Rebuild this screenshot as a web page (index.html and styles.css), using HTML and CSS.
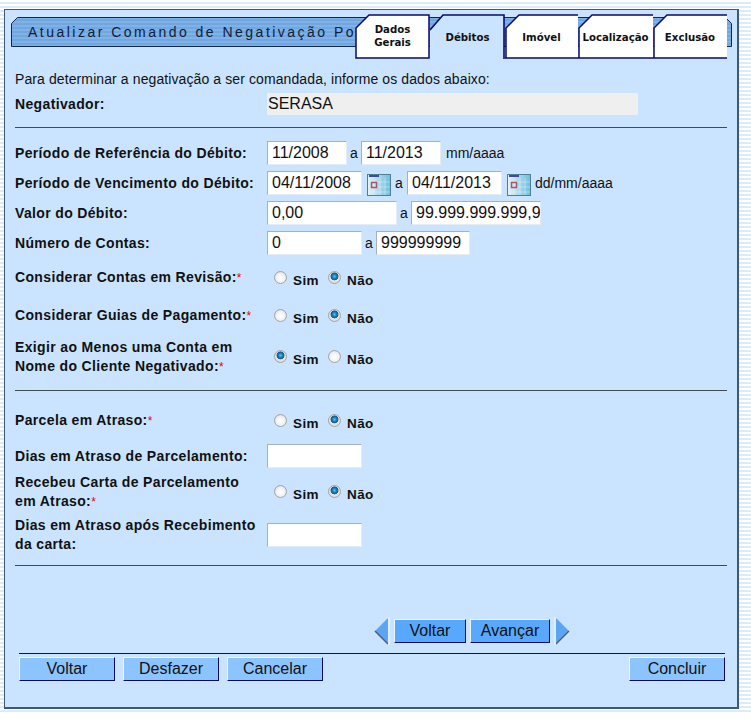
FILE: index.html
```html
<!DOCTYPE html>
<html lang="pt">
<head>
<meta charset="utf-8">
<title>Atualizar Comando de Negativação</title>
<link rel="stylesheet" href="styles.css">
</head>
<body>
<main class="panel">
  <header class="head">
    <div class="titlebar">
      <svg class="fill" width="721" height="30" viewBox="0 0 721 30">
        <defs>
          <pattern id="lines" width="4" height="4" patternUnits="userSpaceOnUse"><rect width="4" height="4" fill="#7fb2e8"/><rect y="2" width="4" height="2" fill="#72a6de"/></pattern>
        </defs>
        <path d="M.5 29.5V6.5L6.5.5H714.5L720.5 6.5V29.5Z" fill="url(#lines)" stroke="#10264a"/>
      </svg>
      <h1 class="title">Atualizar Comando de Negativação Po</h1>
    </div>
    <nav class="tabs">
      <a class="tab"><svg class="fill" width="75" height="45" viewBox="0 0 75 45"><path d="M1 44V14L14 1H74V44Z" fill="#fff" stroke="#0a0a6a" stroke-width="1.5"/></svg><span class="tablabel">Dados<br>Gerais</span></a>
      <a class="tab"><svg class="fill" width="75" height="45" viewBox="0 0 75 45"><path d="M0 16L13 1H74V44H0Z" fill="#cae4ff"/><path d="M0 16L13 1H74V45" fill="none" stroke="#0a0a6a" stroke-width="1.6"/></svg><span class="tablabel up">Débitos</span></a>
      <a class="tab tab-i"><svg class="fill" width="73" height="45" viewBox="0 0 73 45"><path d="M1 44V14L14 1H73V44Z" fill="#fff"/><path d="M0 44H73M1 44V14L14 1H73" fill="none" stroke="#0a0a6a" stroke-width="1.5"/></svg><span class="tablabel up">Imóvel</span></a>
      <a class="tab"><svg class="fill" width="75" height="45" viewBox="0 0 75 45"><path d="M1 44V14L14 1H75V44Z" fill="#fff"/><path d="M0 44H75M1 44V14L14 1H75" fill="none" stroke="#0a0a6a" stroke-width="1.5"/></svg><span class="tablabel up">Localização</span></a>
      <a class="tab tab-last"><svg class="fill" width="74" height="45" viewBox="0 0 74 45"><path d="M1 44V14L14 1H74V44Z" fill="#fff"/><path d="M0 44H74M1 44V14L14 1H74" fill="none" stroke="#0a0a6a" stroke-width="1.5"/></svg><span class="tablabel up">Exclusão</span></a>
    </nav>
  </header>

  <div class="content">
    <p class="intro">Para determinar a negativação a ser comandada, informe os dados abaixo:</p>
    <div class="row r-neg">
      <label class="lab">Negativador:</label>
      <div class="readonly">SERASA</div>
    </div>
    <hr class="rule rule-1">

    <div class="row r-field">
      <label class="lab">Período de Referência do Débito:</label>
      <div class="ctl"><input class="w80" value="11/2008"><span class="a">a</span><input class="w80" value="11/2013"><span class="hint">mm/aaaa</span></div>
    </div>
    <div class="row r-field">
      <label class="lab">Período de Vencimento do Débito:</label>
      <div class="ctl">
        <input class="w95" value="04/11/2008">
        <svg class="cal" width="24" height="22" viewBox="0 0 24 22"><defs><linearGradient id="calfill" x1="0" y1="0" x2="1" y2="0"><stop offset="0" stop-color="#e6f1f4"/><stop offset="1" stop-color="#6cc0e2"/></linearGradient></defs><rect width="24" height="22" fill="#4f7f90"/><rect x="1" y="1" width="22" height="20" fill="url(#calfill)"/><rect x="2" y="1" width="10" height="2" fill="#3d4aa8"/><path d="M1 8H23M1 13H23M1 18H23M7 4V21M13 4V21M18 4V21" stroke="#f0f9fc" stroke-opacity=".4"/><rect x="4.5" y="8.5" width="5" height="5" fill="#d8e4ea" stroke="#a8566a" stroke-width="1.5"/></svg>
        <span class="a a-cal">a</span>
        <input class="w95" value="04/11/2013">
        <svg class="cal" width="24" height="22" viewBox="0 0 24 22"><rect width="24" height="22" fill="#4f7f90"/><rect x="1" y="1" width="22" height="20" fill="url(#calfill)"/><rect x="2" y="1" width="10" height="2" fill="#3d4aa8"/><path d="M1 8H23M1 13H23M1 18H23M7 4V21M13 4V21M18 4V21" stroke="#f0f9fc" stroke-opacity=".4"/><rect x="4.5" y="8.5" width="5" height="5" fill="#d8e4ea" stroke="#a8566a" stroke-width="1.5"/></svg>
        <span class="hint hint-cal">dd/mm/aaaa</span>
      </div>
    </div>
    <div class="row r-field">
      <label class="lab">Valor do Débito:</label>
      <div class="ctl"><input class="w130" value="0,00"><span class="a">a</span><input class="w130" value="99.999.999.999,99"></div>
    </div>
    <div class="row r-field">
      <label class="lab">Número de Contas:</label>
      <div class="ctl"><input class="w95" value="0"><span class="a">a</span><input class="w94" value="999999999"></div>
    </div>

    <div class="row r-radio r-revisao">
      <label class="lab">Considerar Contas em Revisão:<span class="req">*</span></label>
      <div class="radios"><input type="radio" name="r1"><span class="opt">Sim</span><input type="radio" name="r1" checked><span class="opt">Não</span></div>
    </div>
    <div class="row r-radio r-guias">
      <label class="lab">Considerar Guias de Pagamento:<span class="req">*</span></label>
      <div class="radios"><input type="radio" name="r2"><span class="opt">Sim</span><input type="radio" name="r2" checked><span class="opt">Não</span></div>
    </div>
    <div class="row r-two r-exigir">
      <label class="lab">Exigir ao Menos uma Conta em<br>Nome do Cliente Negativado:<span class="req">*</span></label>
      <div class="radios"><input type="radio" name="r3" checked><span class="opt">Sim</span><input type="radio" name="r3"><span class="opt">Não</span></div>
    </div>
    <hr class="rule rule-2">

    <div class="row r-radio r-parcela">
      <label class="lab">Parcela em Atraso:<span class="req">*</span></label>
      <div class="radios"><input type="radio" name="r4"><span class="opt">Sim</span><input type="radio" name="r4" checked><span class="opt">Não</span></div>
    </div>
    <div class="row r-field r-dias">
      <label class="lab">Dias em Atraso de Parcelamento:</label>
      <div class="ctl"><input class="w95" value=""></div>
    </div>
    <div class="row r-two r-recebeu">
      <label class="lab">Recebeu Carta de Parcelamento<br>em Atraso:<span class="req">*</span></label>
      <div class="radios"><input type="radio" name="r5"><span class="opt">Sim</span><input type="radio" name="r5" checked><span class="opt">Não</span></div>
    </div>
    <div class="row r-two r-apos">
      <label class="lab">Dias em Atraso após Recebimento<br>da carta:</label>
      <div class="ctl"><input class="w95" value=""></div>
    </div>
    <hr class="rule rule-3">

    <div class="nav">
      <svg class="arrow" width="16" height="28" viewBox="0 0 16 28"><path d="M14 1V27L1 14Z" fill="#5aa6f4"/><path d="M1 14L14 27" stroke="#55606e" stroke-width="1.5" fill="none"/><path d="M15 0V28" stroke="#e6f2ff" stroke-width="1.5"/></svg>
      <button class="btn btn-nav btn-voltar">Voltar</button>
      <button class="btn btn-nav btn-avancar">Avançar</button>
      <svg class="arrow" width="16" height="28" viewBox="0 0 16 28"><path d="M2 1V27L15 14Z" fill="#5aa6f4"/><path d="M2 27L15 14" stroke="#55606e" stroke-width="1.5" fill="none"/><path d="M1 0V28" stroke="#e6f2ff" stroke-width="1.5"/></svg>
    </div>
    <div class="actions">
      <button class="btn">Voltar</button>
      <button class="btn">Desfazer</button>
      <button class="btn">Cancelar</button>
      <button class="btn btn-end">Concluir</button>
    </div>
  </div>
</main>
</body>
</html>
```
FILE: styles.css
```css
* { box-sizing: border-box; }
html, body { margin: 0; padding: 0; }
body {
  height: 724px;
  overflow: hidden;
  background-color: #fff;
  padding: 9px 12px 0 4px;
  font-family: "Liberation Sans", Arial, sans-serif;
  color: #000;
  position: relative;
}
body::before {
  content: "";
  position: absolute;
  left: 0; top: 0; right: 0; height: 712px;
  background: repeating-linear-gradient(to bottom, #fff 0 2px, #dcebf8 2px 4px);
  z-index: -1;
}
.panel {
  width: 735px;
  height: 700px;
  background: #cae4ff;
  border: 1px solid #3c5a78;
  border-width: 1px 2px 2px 1px;
  position: relative;
}
.head { height: 49px; padding: 7px 0 0 6px; position: relative; }
.titlebar { position: relative; width: 721px; height: 30px; padding: 6px 0 0 17px; }
.fill { position: absolute; left: 0; top: 0; display: block; }
.title {
  position: relative;
  margin: 0;
  font-size: 14px;
  line-height: 18px;
  font-weight: normal;
  letter-spacing: 2.48px;
  white-space: nowrap;
  color: #10203a;
}
.tabs { position: absolute; left: 350px; top: 4px; display: flex; }
.tab { position: relative; display: flex; width: 75px; height: 45px; align-items: center; justify-content: center; text-decoration: none; color: #000; }
.tab-i { width: 73px; }
.tab-last { width: 74px; }
.tablabel {
  position: relative;
  font-family: "DejaVu Sans", sans-serif;
  font-size: 10.2px;
  line-height: 13px;
  font-weight: bold;
  text-align: center;
  color: #111;
  white-space: nowrap;
  padding-bottom: 2px;
}
.up { padding-top: 1px; padding-bottom: 0; }

.content { padding: 0 0 0 10px; width: 717px; }
.intro { margin: 0; padding-top: 10px; font-size: 14px; line-height: 20px; height: 30px; color: #111; letter-spacing: 0.1px; }
.row { display: flex; align-items: center; }
.lab {
  flex: 0 0 252px;
  margin: 0;
  font-size: 14px;
  line-height: 19px;
  font-weight: bold;
  letter-spacing: 0.35px;
  color: #111;
  white-space: nowrap;
}
.req { color: #e00; font-weight: normal; font-size: 12px; letter-spacing: 0; }
.r-neg { height: 24px; margin-top: 3px; }
.readonly { width: 371px; height: 22px; background: #efefef; font-size: 16px; line-height: 22px; padding-left: 1px; color: #111; }
.rule { height: 0; margin: 0; border: 0; border-top: 1px solid #3f4a52; width: 712px; }
.rule-1 { margin-top: 11px; margin-bottom: 13px; }
.rule-2 { margin-top: 14px; margin-bottom: 20px; }
.rule-3 { margin-top: 11px; }
.r-field { height: 24px; margin-bottom: 6px; }
.ctl { display: flex; align-items: center; height: 24px; }
input:not([type=radio]) {
  height: 24px;
  margin: 0;
  padding: 0 0 0 4px;
  background: #fff;
  border: 1px solid;
  border-color: #a8b0b8 #e4ecf4 #e4ecf4 #a8b0b8;
  font-family: "Liberation Sans", Arial, sans-serif;
  font-size: 16px;
  color: #111;
  outline: none;
}
.w80 { width: 80px; }
.w95 { width: 95px; }
.w94 { width: 94px; }
.w130 { width: 130px; }
.a { font-size: 14px; width: 14px; text-align: center; color: #111; flex: none; }
.a-cal { width: 16px; }
.cal { margin: 4px 0 0 5px; flex: none; }
.hint { font-size: 14px; margin-left: 5px; color: #111; }
.hint-cal { margin-left: 4px; }
.r-radio { height: 20px; }
.r-revisao { margin-top: 13px; }
.r-guias { margin-top: 18px; }
.r-two { height: 38px; }
.r-exigir { margin-top: 12px; }
.radios { display: flex; align-items: center; padding-top: 4px; }
input[type=radio] {
  appearance: none;
  -webkit-appearance: none;
  flex: none;
  width: 13px;
  height: 13px;
  margin: -5px 0 0 7px;
  border-radius: 50%;
  border: 1px solid #a4a4a4;
  background: radial-gradient(circle at 50% 55%, #fff 0, #f0f0f0 55%, #c4c4c4 100%);
}
input[type=radio]:checked {
  background: radial-gradient(circle at 50% 40%, #5dbdea 0, #0a6ea8 32%, #1c5a80 42%, #e8e8e8 50%, #cfcfcf 100%);
}
.opt { font-size: 13.5px; font-weight: bold; letter-spacing: 0.4px; padding-left: 6px; color: #111; width: 34px; flex: none; }
.r-dias { margin: 13px 0 0; }
.r-recebeu { margin-top: 5px; }
.r-apos { margin-top: 5px; }
.nav { display: flex; align-items: center; height: 28px; margin-top: 51px; padding-left: 359px; gap: 4px; }
.arrow { flex: none; }
.btn {
  height: 24px;
  width: 96px;
  margin: 0;
  padding: 0;
  background: #8cc4ff;
  border: 1px solid;
  border-color: #eef6ff #0a0a6a #0a0a6a #eef6ff;
  font-family: "Liberation Sans", Arial, sans-serif;
  font-size: 16px;
  color: #111;
  flex: none;
}
.btn-nav { background: #58a8ff; }
.btn-voltar { width: 72px; }
.btn-avancar { width: 80px; }
.actions { display: flex; gap: 8px; width: 706px; margin-left: 4px; margin-top: 8px; border-top: 1px solid #10182a; padding-top: 3px; }
.btn-end { margin-left: auto; }
```
